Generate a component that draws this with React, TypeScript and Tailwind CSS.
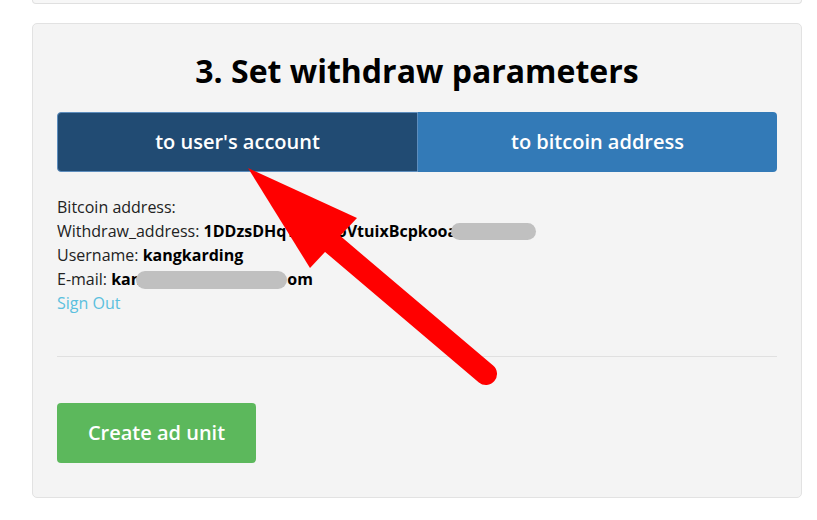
import React from "react";

export default function App() {
  return (
    <div
      className="relative w-[817px] h-[520px] bg-white overflow-hidden text-[#222]"
      style={{ fontFamily: '"Open Sans", "Liberation Sans", sans-serif' }}
    >
      <div className="ml-[32px] w-[770px] h-[4px] border-x border-b border-[#e0e0e0] bg-[#f7f7f7] rounded-b-[5px]" />
      <div className="mt-[19px] ml-[32px] w-[770px] h-[475px] border border-[#e2e2e2] bg-[#f4f4f4] rounded-[5px] px-[24px] pt-[29px]">
        <h2 className="text-[32px] leading-[35px] font-bold text-center text-black">
          3. Set withdraw parameters
        </h2>
        <div className="mt-[24px] flex h-[60px]">
          <div className="flex-1 flex items-center justify-center bg-[#214b73] border border-[#5d8dbd] rounded-l-[4px] text-white text-[20px] font-semibold">
            to user's account
          </div>
          <div className="flex-1 flex items-center justify-center bg-[#337ab7] rounded-r-[4px] text-white text-[20px] font-semibold">
            to bitcoin address
          </div>
        </div>
        <div className="mt-[23px] text-[16px] leading-[24px]">
          <div>Bitcoin address:</div>
          <div className="whitespace-nowrap">
            Withdraw_address:{" "}
            <b className="font-bold text-black">1DDzsDHqT7nHxoVtuixBcpkooa</b>
            <span className="inline-block align-middle -ml-[6px] w-[85px] h-[17px] rounded-full bg-[#c0c0c0] relative top-[-1px]" />
          </div>
          <div>
            Username: <b className="font-bold text-black">kangkarding</b>
          </div>
          <div className="whitespace-nowrap">
            E-mail: <b className="font-bold text-black">kan</b>
            <span className="inline-block align-middle -ml-[5px] w-[151px] h-[18px] rounded-full bg-[#c0c0c0] relative top-[-1px]" />
            <b className="font-bold text-black">om</b>
          </div>
          <div className="text-[#5bc0de]">Sign Out</div>
        </div>
        <div className="mt-[41px] h-px bg-[#e0e0e0]" />
        <div className="mt-[46px] inline-flex items-center justify-center w-[199px] h-[60px] bg-[#5cb85c] rounded-[4px] text-white text-[20px] font-semibold">
          Create ad unit
        </div>
      </div>
      <svg className="absolute inset-0 pointer-events-none" width="817" height="520" viewBox="0 0 817 520">
        <polygon points="248,168 357,218 310,268" fill="#ff0000" />
        <line x1="328" y1="240" x2="486" y2="374" stroke="#ff0000" strokeWidth="22" strokeLinecap="round" />
      </svg>
    </div>
  );
}
